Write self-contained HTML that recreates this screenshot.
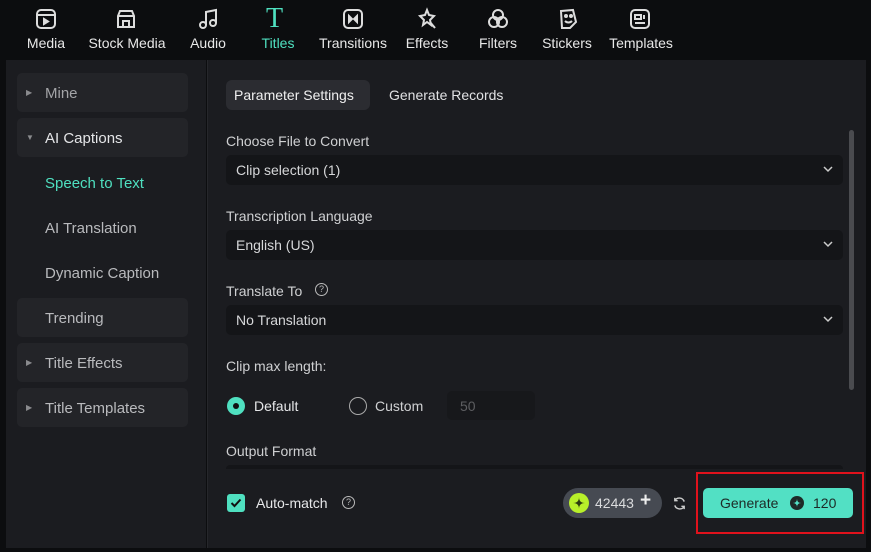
<!DOCTYPE html>
<html><head><style>
*{margin:0;padding:0;box-sizing:border-box}
body{width:871px;height:552px;background:#0c0d0f;font-family:"Liberation Sans",sans-serif;position:relative;overflow:hidden;color:#d6d7d9}
.a{position:absolute}
.tb{font-size:14px;color:#e8e8e8;text-align:center;top:35px}
.ic{top:7px;width:24px;height:24px}
.side{left:6px;top:60px;width:200px;height:488px;background:#1b1c20}
.main{left:207px;top:60px;width:659px;height:488px;background:#1b1c20;border-left:1px solid #26272b}
.it{left:17px;width:171px;height:39px;background:#232428;border-radius:5px}
.st{font-size:15px;color:#b9babd;left:45px}
.tri{font-size:8px;color:#8a8b8e;left:26px}
.lab{font-size:14px;color:#cfd0d2;left:226px}
.dd{left:226px;width:617px;height:30px;background:#141518;border-radius:5px;font-size:14px;color:#d6d7d9;padding:7px 10px}
.chev{position:absolute;right:9px;top:8px}
</style></head><body>
<!-- top bar -->
<svg class="a ic" style="left:34px" viewBox="0 0 24 24" fill="none" stroke="#ddd" stroke-width="2"><rect x="3" y="3" width="18" height="18" rx="4"/><path d="M3 8h18"/><path d="M10 12l4 2.5-4 2.5z" fill="#ddd"/></svg>
<div class="a tb" style="left:22px;width:48px">Media</div>
<svg class="a ic" style="left:114px" viewBox="0 0 24 24" fill="none" stroke="#ddd" stroke-width="2"><path d="M4 9l2-5h12l2 5v11H4z"/><path d="M4 9h16M9 20v-6h6v6"/></svg>
<div class="a tb" style="left:84px;width:86px">Stock Media</div>
<svg class="a ic" style="left:196px" viewBox="0 0 24 24" fill="none" stroke="#ddd" stroke-width="2"><circle cx="7" cy="18" r="3"/><circle cx="17" cy="16" r="3"/><path d="M10 18V5l10-2v13"/></svg>
<div class="a tb" style="left:184px;width:48px">Audio</div>
<div class="a" style="left:266px;top:3px;font-size:28px;color:#4fe0c0;font-family:'Liberation Serif',serif">T</div>
<div class="a tb" style="left:255px;width:46px;color:#4fe0c0">Titles</div>
<svg class="a ic" style="left:341px" viewBox="0 0 24 24" fill="none" stroke="#ddd" stroke-width="2"><rect x="3" y="3" width="18" height="18" rx="4"/><path d="M8 9l3 3-3 3zM16 9l-3 3 3 3z" fill="#ddd"/></svg>
<div class="a tb" style="left:316px;width:74px">Transitions</div>
<svg class="a ic" style="left:415px" viewBox="0 0 24 24" fill="none" stroke="#ddd" stroke-width="2"><path d="M12 3l2 5 5 1-4 4 1 5-4-3-4 3 1-5-4-4 5-1z"/><path d="M15 15l5 6"/></svg>
<div class="a tb" style="left:403px;width:48px">Effects</div>
<svg class="a ic" style="left:486px" viewBox="0 0 24 24" fill="none" stroke="#ddd" stroke-width="2"><circle cx="12" cy="8" r="5"/><circle cx="8" cy="15" r="5"/><circle cx="16" cy="15" r="5"/></svg>
<div class="a tb" style="left:475px;width:46px">Filters</div>
<svg class="a ic" style="left:556px" viewBox="0 0 24 24" fill="none" stroke="#ddd" stroke-width="2"><path d="M5 4l12-1 3 12-6 6-8 0z"/><path d="M9 14c2 2 5 2 7 0"/><circle cx="10" cy="9" r="1" fill="#ddd"/><circle cx="15" cy="9" r="1" fill="#ddd"/></svg>
<div class="a tb" style="left:540px;width:54px">Stickers</div>
<svg class="a ic" style="left:628px" viewBox="0 0 24 24" fill="none" stroke="#ddd" stroke-width="2"><rect x="3" y="3" width="18" height="18" rx="4"/><path d="M7 16h10M7 8h6v4H7zM16 8v4"/></svg>
<div class="a tb" style="left:606px;width:70px">Templates</div>

<div class="a side"></div>
<div class="a main"></div>

<div class="a it" style="top:73px"></div><div class="a tri" style="top:88px">▶</div><div class="a st" style="top:85px;color:#a3a4a7">Mine</div>
<div class="a it" style="top:118px"></div><div class="a tri" style="top:133px">▼</div><div class="a st" style="top:130px;color:#e4e5e7">AI Captions</div>
<div class="a st" style="top:175px;color:#4fe0c0">Speech to Text</div>
<div class="a st" style="top:220px">AI Translation</div>
<div class="a st" style="top:265px">Dynamic Caption</div>
<div class="a it" style="top:298px"></div><div class="a st" style="top:310px">Trending</div>
<div class="a it" style="top:343px"></div><div class="a tri" style="top:358px">▶</div><div class="a st" style="top:355px">Title Effects</div>
<div class="a it" style="top:388px"></div><div class="a tri" style="top:403px">▶</div><div class="a st" style="top:400px">Title Templates</div>

<div class="a" style="left:226px;top:80px;width:144px;height:30px;background:#2b2c31;border-radius:6px;font-size:14px;color:#f0f0f0;padding:7px 8px">Parameter Settings</div>
<div class="a" style="left:389px;top:87px;font-size:14px;color:#e0e1e3">Generate Records</div>

<div class="a lab" style="top:133px">Choose File to Convert</div>
<div class="a dd" style="top:155px">Clip selection (1)<svg class="chev" width="12" height="12" viewBox="0 0 12 12"><path d="M2 4l4 4 4-4" stroke="#ccc" stroke-width="1.5" fill="none"/></svg></div>
<div class="a lab" style="top:208px">Transcription Language</div>
<div class="a dd" style="top:230px">English (US)<svg class="chev" width="12" height="12" viewBox="0 0 12 12"><path d="M2 4l4 4 4-4" stroke="#ccc" stroke-width="1.5" fill="none"/></svg></div>
<div class="a lab" style="top:283px">Translate To</div>
<div class="a" style="left:315px;top:283px;width:13px;height:13px;border:1.3px solid #bbb;border-radius:50%;font-size:9px;text-align:center;line-height:11px;color:#bbb">?</div>
<div class="a dd" style="top:305px">No Translation<svg class="chev" width="12" height="12" viewBox="0 0 12 12"><path d="M2 4l4 4 4-4" stroke="#ccc" stroke-width="1.5" fill="none"/></svg></div>
<div class="a lab" style="top:358px">Clip max length:</div>
<div class="a" style="left:227px;top:397px;width:18px;height:18px;border-radius:50%;background:#4fe0c0"></div>
<div class="a" style="left:233px;top:403px;width:6px;height:6px;border-radius:50%;background:#111"></div>
<div class="a lab" style="left:254px;top:398px;color:#e6e7e9">Default</div>
<div class="a" style="left:349px;top:397px;width:18px;height:18px;border-radius:50%;border:1.5px solid #aaa"></div>
<div class="a lab" style="left:375px;top:398px">Custom</div>
<div class="a" style="left:447px;top:391px;width:88px;height:29px;background:#17181b;border-radius:5px;font-size:14px;color:#5d5e61;padding:7px 13px">50</div>
<div class="a lab" style="top:443px">Output Format</div>
<div class="a" style="left:226px;top:465px;width:617px;height:4px;background:#141518;border-radius:4px 4px 0 0"></div>
<div class="a" style="left:849px;top:130px;width:5px;height:260px;background:#4a4b4f;border-radius:3px"></div>

<div class="a" style="left:227px;top:494px;width:18px;height:18px;border-radius:3px;background:#4fe0c0"></div>
<svg class="a" style="left:229px;top:496px" width="14" height="14" viewBox="0 0 14 14"><path d="M2.5 7l3 3 6-6.5" stroke="#111" stroke-width="2" fill="none"/></svg>
<div class="a lab" style="left:256px;top:495px;color:#e6e7e9">Auto-match</div>
<div class="a" style="left:342px;top:496px;width:13px;height:13px;border:1.3px solid #bbb;border-radius:50%;font-size:9px;text-align:center;line-height:11px;color:#bbb">?</div>
<div class="a" style="left:563px;top:488px;width:99px;height:30px;background:#464a52;border-radius:15px"></div>
<div class="a" style="left:569px;top:493px;width:20px;height:20px;border-radius:50%;background:#b8f02a"></div>
<svg class="a" style="left:572px;top:496px" width="14" height="14" viewBox="0 0 14 14"><path d="M7 1Q7 7 13 7Q7 7 7 13Q7 7 1 7Q7 7 7 1z" fill="#2c3a10"/></svg>
<div class="a" style="left:595px;top:495px;font-size:14px;color:#dadbdd">42443</div>
<div class="a" style="left:640px;top:490px;font-size:19px;color:#eee;font-weight:bold">+</div>
<svg class="a" style="left:672px;top:496px" width="15" height="15" viewBox="0 0 16 16" fill="none" stroke="#ccc" stroke-width="1.5"><path d="M13 6A5.5 5.5 0 0 0 3 5M3 2v3h3M3 10a5.5 5.5 0 0 0 10 1M13 14v-3h-3"/></svg>
<div class="a" style="left:696px;top:472px;width:168px;height:62px;border:2px solid #e0121c"></div>
<div class="a" style="left:703px;top:488px;width:150px;height:30px;background:#52e0c4;border-radius:5px"></div>
<div class="a" style="left:720px;top:495px;font-size:14px;color:#1d2a27">Generate</div>
<div class="a" style="left:790px;top:496px;width:14px;height:14px;border-radius:50%;background:#1d2a27"></div>
<svg class="a" style="left:792px;top:498px" width="10" height="10" viewBox="0 0 14 14"><path d="M7 1Q7 7 13 7Q7 7 7 13Q7 7 1 7Q7 7 7 1z" fill="#52e0c4"/></svg>
<div class="a" style="left:813px;top:495px;font-size:14px;color:#1d2a27">120</div>
</body></html>
